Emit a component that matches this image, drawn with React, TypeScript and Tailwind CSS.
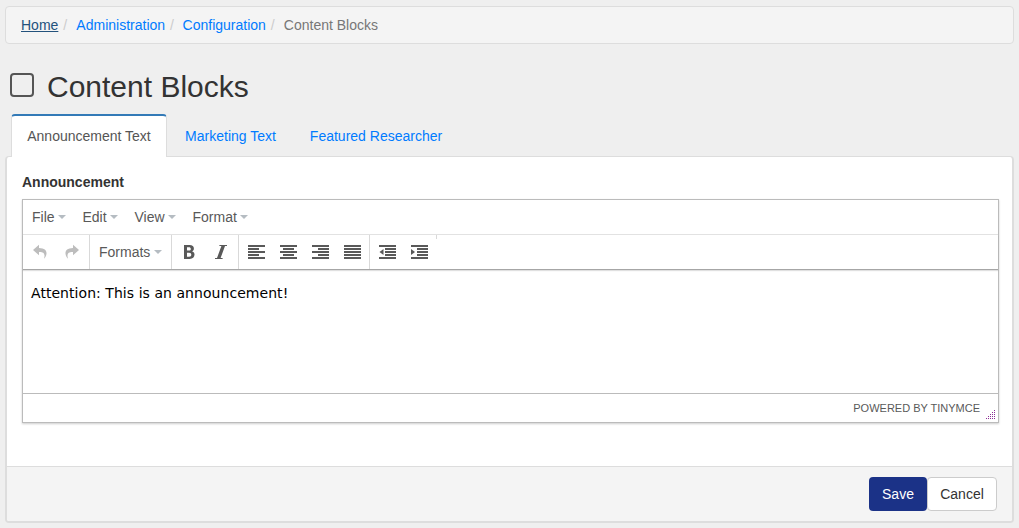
import React from "react";

const menus = [
  { label: "File", width: "w-[50.5px]" },
  { label: "Edit", width: "w-[52px]" },
  { label: "View", width: "w-[58px]" },
  { label: "Format", width: "w-[70px]" },
];

function Caret() {
  return (
    <svg width="8" height="4" viewBox="0 0 8 4" className="ml-[3.500px] shrink-0">
      <path d="M0 0h8L4 4z" fill="#b5bcc2" />
    </svg>
  );
}

function Undo({ flip = false }: { flip?: boolean }) {
  return (
    <svg width="16" height="16" viewBox="0 0 16 16" className={flip ? "-scale-x-100" : ""}>
      <path d="M7 .7 1 6l6 5.300V8c3.600-.3 6.800 1 5 6.800C15.800 10.800 16.200 4.300 7 4.100z" fill="#bdbdbd" />
    </svg>
  );
}

function Bold() {
  return (
    <svg width="16" height="16" viewBox="0 0 16 16">
      <path
        fillRule="evenodd"
        d="M3 1h5.600c2.800 0 4.300 1.400 4.300 3.600 0 1.300-.6 2.200-1.700 2.800 1.500.4 2.300 1.500 2.300 3.200 0 2.700-1.800 4.400-4.800 4.400H3zM6 3.300v3.200h1.800c1.400 0 2-.5 2-1.600s-.6-1.600-2-1.600zm0 5.400v4h2c1.600 0 2.300-.7 2.300-2s-.7-2-2.300-2z"
        fill="#595959"
      />
    </svg>
  );
}

function Italic() {
  return (
    <svg width="16" height="16" viewBox="0 0 16 16">
      <path d="M14 1v1h-2L7.600 14h2v1H2v-1h2L8.400 2h-2V1z" fill="#595959" />
    </svg>
  );
}

function Lines({ rows, arrow }: { rows: number[][]; arrow?: string }) {
  return (
    <svg width="17" height="16" viewBox="0 0 17 16" shapeRendering="crispEdges">
      {rows.map(([x, w], i) => (
        <rect key={i} x={x} y={1 + i * 3} width={w} height="2" fill="#595959" />
      ))}
      {arrow && <path d={arrow} fill="#595959" shapeRendering="auto" />}
    </svg>
  );
}

const aligns = [
  [[0, 17], [0, 11], [0, 17], [0, 11], [0, 17]],
  [[0, 17], [3, 11], [0, 17], [3, 11], [0, 17]],
  [[0, 17], [6, 11], [0, 17], [6, 11], [0, 17]],
  [[0, 17], [0, 17], [0, 17], [0, 17], [0, 17]],
];
const indentRows = [[0, 17], [6, 11], [6, 11], [6, 11], [0, 17]];

function Tool({ children }: { children: React.ReactNode }) {
  return <button className="flex h-full w-8 items-center justify-center">{children}</button>;
}

function ResizeGrip() {
  const dots = [];
  for (let row = 0; row < 5; row++)
    for (let col = 4 - row; col < 5; col++)
      dots.push(<rect key={row + "-" + col} x={col * 2} y={row * 2} width="1" height="1" fill="#8e2f96" />);
  return <svg width="9" height="9" viewBox="0 0 9 9" shapeRendering="crispEdges" className="block">{dots}</svg>;
}

export default function App() {
  return (
    <div className="h-[528px] overflow-hidden bg-[#efefef] px-[5px] pt-1.5 font-['Liberation_Sans',Arial,sans-serif] text-sm leading-5 text-[#333]">
      <nav className="flex h-[38px] items-center rounded border border-[#ddd] bg-[#f4f4f4] px-[15px]">
        <a className="text-[#23527c] underline">Home</a>
        <span className="w-[18px] pl-[5px] text-[#ccc]">/</span>
        <a className="text-[#007bff]">Administration</a>
        <span className="w-[17.500px] pl-[5px] text-[#ccc]">/</span>
        <a className="text-[#007bff]">Configuration</a>
        <span className="w-[18px] pl-[5px] text-[#ccc]">/</span>
        <span className="text-[#777]">Content Blocks</span>
      </nav>

      <h1 className="mt-[26px] flex h-[33px] items-center pl-[5px] text-[30px] leading-[33px]">
        <span className="mb-[3px] mr-[13px] h-[24px] w-[24px] rounded-[4px] border-2 border-[#555]" />
        Content Blocks
      </h1>

      <div className="relative z-10 ml-1.5 mt-[11px] flex h-[43px]">
        <a className="flex w-[156px] items-center justify-center rounded-t border-x border-t-2 border-x-[#ddd] border-t-[#337ab7] bg-white pb-0.5 text-[#555]">
          Announcement Text
        </a>
        <a className="flex w-[127px] items-center justify-center text-[#007bff]">Marketing Text</a>
        <a className="flex w-[164px] items-center justify-center text-[#007bff]">Featured Researcher</a>
      </div>

      <section className="-mt-px h-[367px] w-[1009px] rounded-[4px] border-x-2 border-b-2 border-t border-[#ddd] bg-white">
        <div className="h-[309px] px-[15px] pt-[15px]">
          <label className="block h-[27px] font-bold">Announcement</label>
          <div className="h-[224px] w-[977px] border border-[#bbb] shadow-[0_1px_2px_rgba(0,0,0,0.2)]">
            <div className="flex h-[35px] border-b border-[#e2e2e2] pl-[9px] text-[#595959]">
              {menus.map((m) => (
                <button key={m.label} className={"flex items-center " + m.width}>
                  {m.label}
                  <Caret />
                </button>
              ))}
            </div>
            <div className="flex h-[35px] border-b border-[#a6a6a6] text-[#595959] shadow-[0_1px_1px_rgba(0,0,0,0.12)]">
              <div className="flex w-[67px] border-r border-[#d9d9d9] pl-px">
                <Tool><Undo /></Tool>
                <Tool><Undo flip /></Tool>
              </div>
              <button className="flex w-[82px] items-center border-r border-[#d9d9d9] pl-[9px]">
                Formats
                <Caret />
              </button>
              <div className="flex w-[67px] border-r border-[#d9d9d9] pl-px">
                <Tool><Bold /></Tool>
                <Tool><Italic /></Tool>
              </div>
              <div className="flex w-[131px] border-r border-[#d9d9d9] pl-px">
                {aligns.map((rows, i) => (
                  <Tool key={i}><Lines rows={rows} /></Tool>
                ))}
              </div>
              <div className="flex w-[66px] pl-px">
                <Tool><Lines rows={indentRows} arrow="M4.500 5v6L.5 8z" /></Tool>
                <Tool><Lines rows={indentRows} arrow="M0 5v6l4-3z" /></Tool>
              </div>
              <span className="h-1 w-px bg-[#d9d9d9]" />
            </div>
            <div className="h-[123px] px-2 pt-[13px] font-['DejaVu_Sans',Verdana,sans-serif] text-[14px] tracking-[0.05px] text-black">
              Attention: This is an announcement!
            </div>
            <div className="flex h-[29px] items-center justify-end border-t border-[#bbb] pr-[3px] text-[11px] text-[#595959]">
              POWERED BY TINYMCE
              <span className="ml-[6px] self-end pb-[3px]"><ResizeGrip /></span>
            </div>
          </div>
        </div>
        <footer className="flex h-[55px] justify-end rounded-b-[2px] border-t border-[#ddd] bg-[#f4f4f4] pr-[15px] pt-[10px]">
          <button className="h-[34px] w-[58px] rounded bg-[#1b3287] text-white">Save</button>
          <button className="h-[34px] w-[70px] rounded border border-[#ccc] bg-white">Cancel</button>
        </footer>
      </section>
    </div>
  );
}
